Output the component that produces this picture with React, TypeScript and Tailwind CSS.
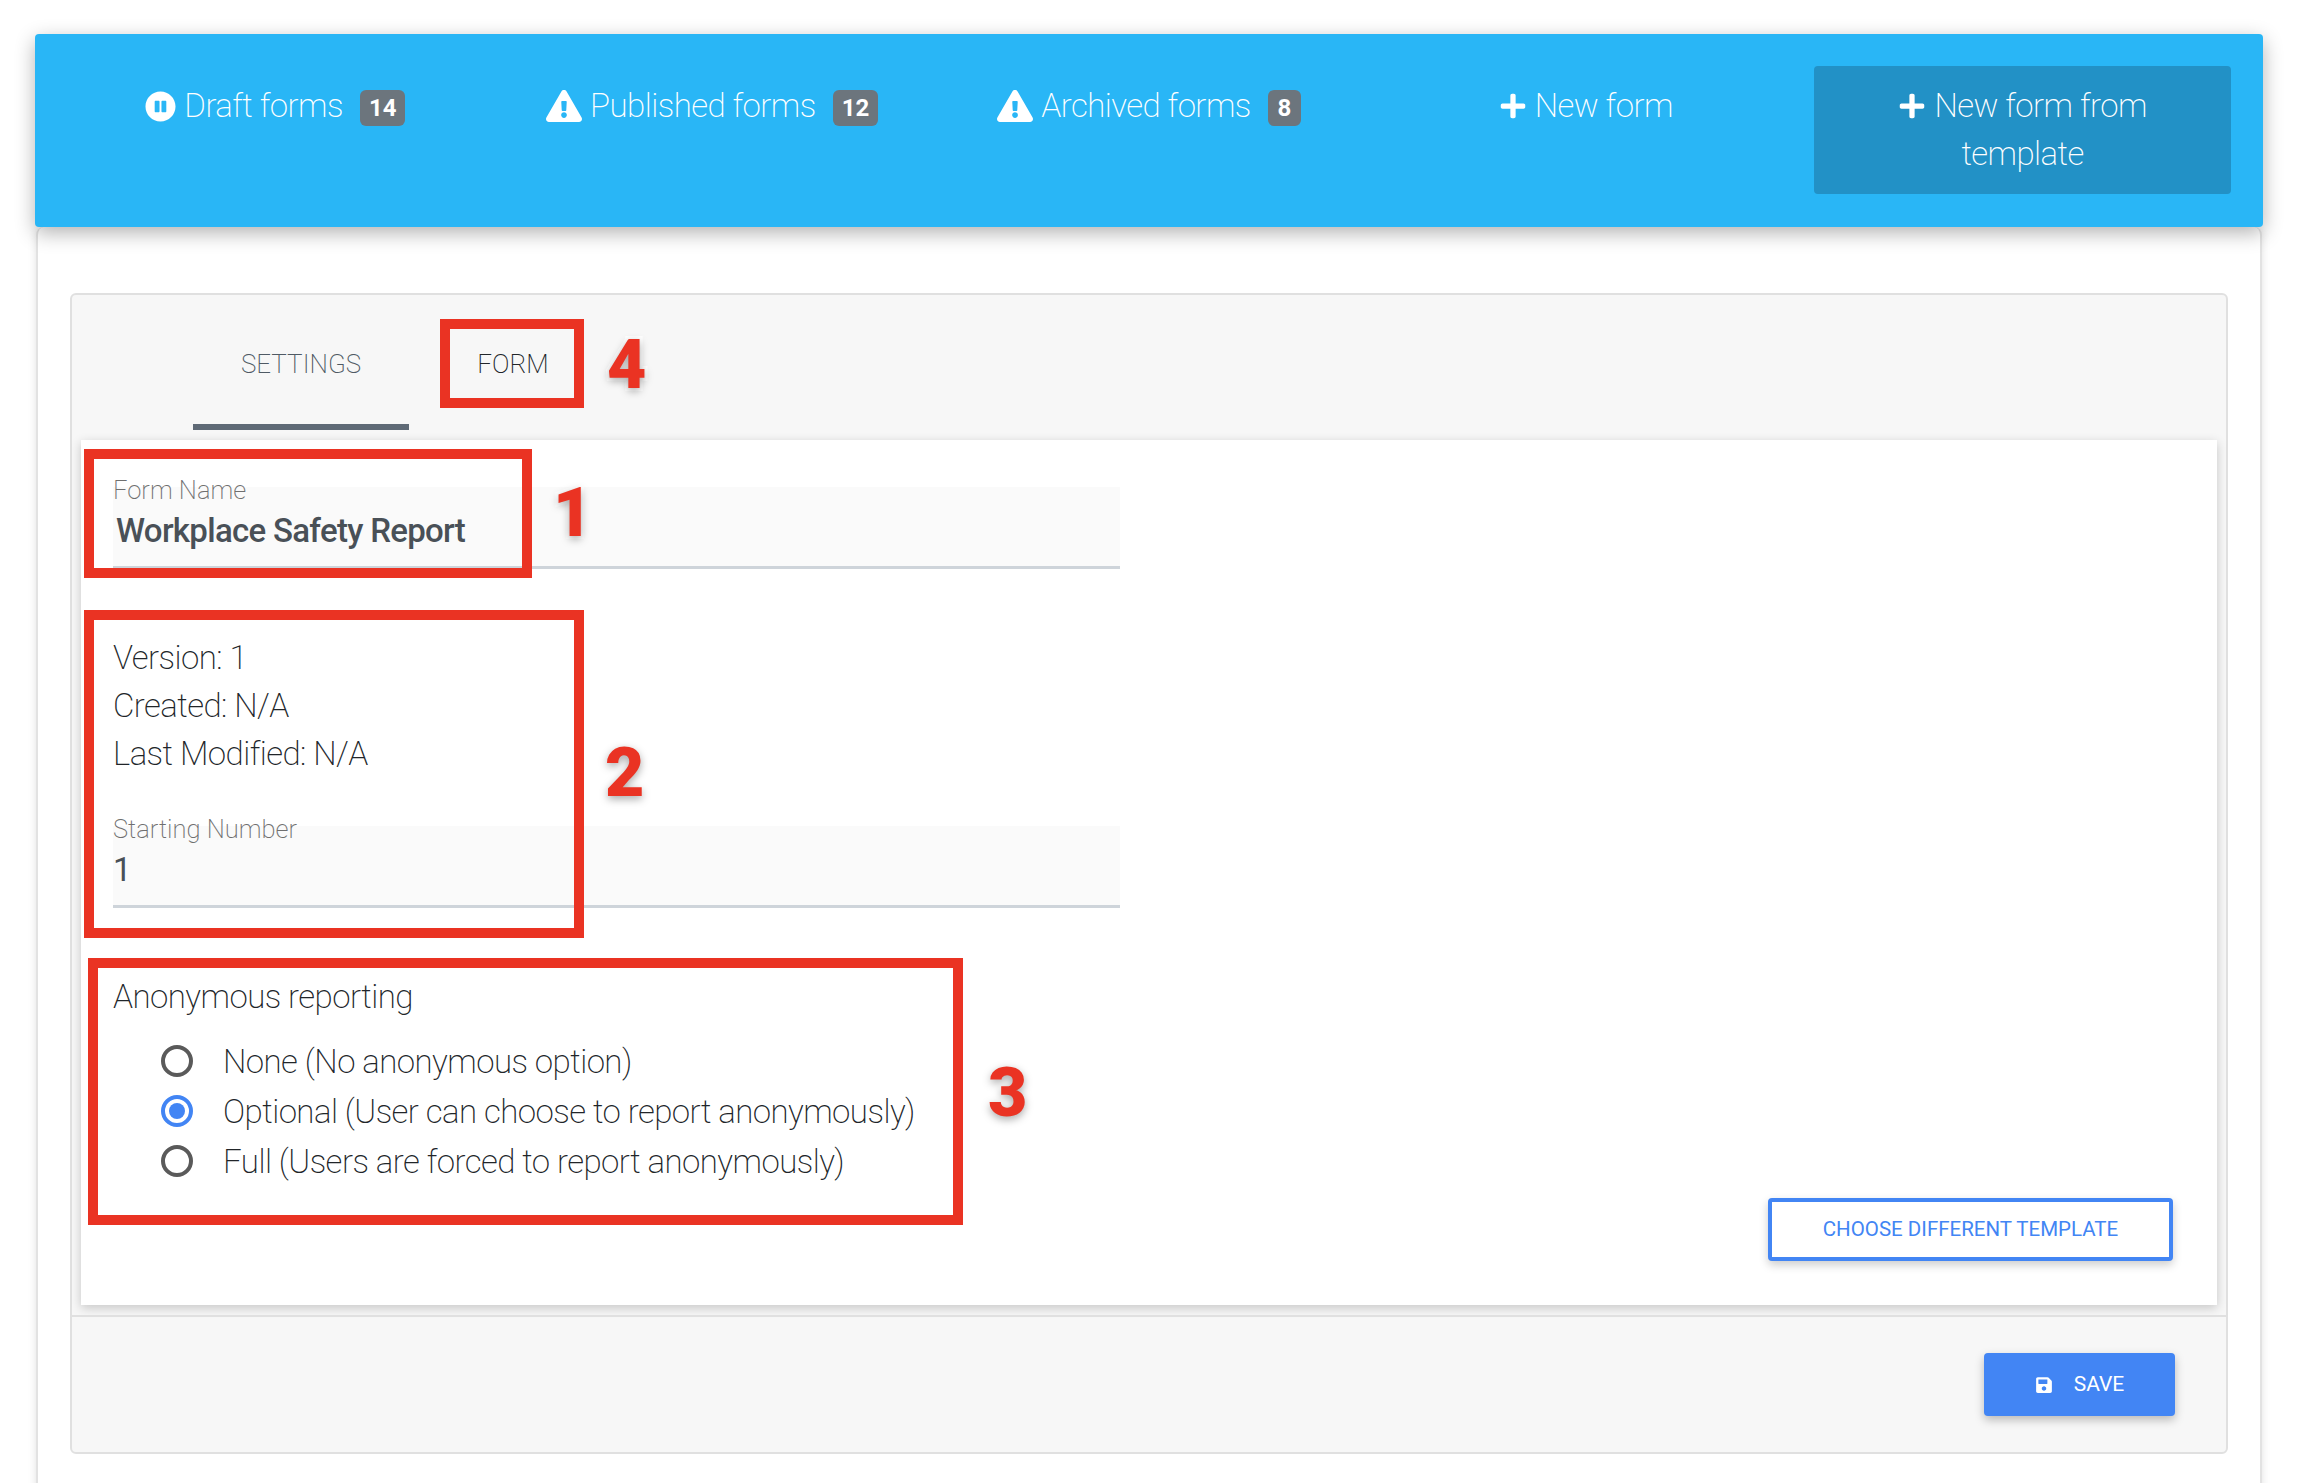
import React from 'react';
import { FaPauseCircle, FaExclamationTriangle, FaPlus, FaSave } from 'react-icons/fa';

const NavBadge: React.FC<{ value: number }> = ({ value }) => (
    <span className="ml-[17px] mt-[8px] inline-flex h-[36px] min-w-[33px] items-center justify-center rounded-[6px] bg-[#6c757d] px-[9px] text-[24px] font-bold leading-none text-white">
        {value}
    </span>
);

const NavItem: React.FC<{ icon: React.ReactNode; label: string; badge?: number }> = ({ icon, label, badge }) => (
    <div className="flex items-start justify-center pt-[16px]">
        <span className="flex h-[48px] items-center">{icon}</span>
        <span className="ml-[8px] text-[33px] font-[200] leading-[48px] tracking-[-0.55px] text-white">{label}</span>
        {badge !== undefined && <NavBadge value={badge} />}
    </div>
);

const Field: React.FC<{ label: string; value: string; bold?: boolean }> = ({ label, value, bold }) => (
    <div className="relative h-[82px] w-[1007px] border-b-[3px] border-[#ced4da] bg-[#fafafa]">
        <span className="absolute left-0 top-[-12px] text-[25.5px] font-[200] leading-[30px] text-[#6f6f6f]">{label}</span>
        <div className={bold ? 'pl-[3px] pt-[20px] text-[33px] font-medium leading-[48px] tracking-[-0.7px] text-[#495057]' : 'pt-[20px] text-[33px] font-normal leading-[48px] text-[#495057]'}>
            {value}
        </div>
    </div>
);

const Radio: React.FC<{ label: string; checked?: boolean }> = ({ label, checked }) => (
    <div className="flex h-[50px] items-center pl-[48px]">
        <span className={checked ? '-mt-[2px] flex h-[32px] w-[32px] items-center justify-center rounded-full border-[4px] border-[#4285f4]' : '-mt-[2px] h-[32px] w-[32px] rounded-full border-[4px] border-[#5a5a5a]'}>
            {checked && <span className="h-[16px] w-[16px] rounded-full bg-[#4285f4]" />}
        </span>
        <span className="ml-[30px] text-[33px] font-[200] leading-[48px] tracking-[-0.55px] text-[#212529]">{label}</span>
    </div>
);

const Callout: React.FC<{ className: string }> = ({ className }) => (
    <div className={`absolute border-[10px] border-[#ea3323] ${className}`} />
);

const CalloutNumber: React.FC<{ value: number; className: string }> = ({ value, className }) => (
    <span className={`absolute text-[68px] font-black leading-none text-[#ea3323] [-webkit-text-stroke:6px_#fff] [paint-order:stroke_fill] [text-shadow:0_3px_8px_rgba(0,0,0,0.35)] ${className}`}>
        {value}
    </span>
);

export default function App() {
    return (
        <div className="relative h-[1483px] overflow-hidden bg-white px-[35px] pt-[34px] [font-family:Roboto,'Liberation_Sans',sans-serif]">
            {/* Header */}
            <div className="relative z-10 grid h-[193px] grid-cols-5 gap-[20px] rounded-[4px] bg-[#29b6f6] px-[32px] pt-[32px] shadow-[0_6px_20px_rgba(0,0,0,0.3)]">
                <NavItem icon={<FaPauseCircle className="text-[31px] text-white" />} label="Draft forms" badge={14} />
                <NavItem icon={<FaExclamationTriangle className="text-[36px] text-white" />} label="Published forms" badge={12} />
                <NavItem icon={<FaExclamationTriangle className="text-[36px] text-white" />} label="Archived forms" badge={8} />
                <NavItem icon={<FaPlus className="text-[28px] text-white" />} label="New form" />
                <div className="h-[128px] rounded-[4px] bg-[#2291c6] pt-[16px] text-center text-[33px] font-[200] leading-[48px] tracking-[-0.55px] text-white">
                    <div className="flex items-center justify-center">
                        <FaPlus className="mr-[8px] text-[28px]" />
                        New form from
                    </div>
                    <div>template</div>
                </div>
            </div>

            {/* Page card */}
            <div className="mx-[1px] h-[1300px] rounded-[8px] border-x-2 border-[#e2e2e2] bg-white px-[32px] pt-[66px] shadow-[0_2px_8px_rgba(0,0,0,0.12)]">
                <div className="rounded-[6px] border-2 border-[#e0e0e0] bg-[#f7f7f7]">
                    {/* Tabs */}
                    <div className="flex h-[145px] pl-[121px]">
                        <div className="flex h-[135px] w-[216px] items-center justify-center border-b-[6px] border-[#5f6a76] pt-[9px] text-[26px] font-[200] text-[#4f5a64]">
                            SETTINGS
                        </div>
                        <div className="ml-[32px] flex h-[135px] w-[144px] items-center justify-center pt-[3px] text-[26px] font-[200] text-[#212529]">
                            FORM
                        </div>
                    </div>

                    {/* Form panel */}
                    <div className="mx-[9px] bg-white pl-[32px] pr-[45px] pt-[47px] pb-[44px] shadow-[0_3px_10px_rgba(0,0,0,0.2)]">
                        <Field label="Form Name" value="Workplace Safety Report" bold />
                        <div className="mt-[65px] text-[33px] font-[200] leading-[48px] tracking-[-0.55px] text-[#212529]">
                            <div>Version: 1</div>
                            <div>Created: N/A</div>
                            <div>Last Modified: N/A</div>
                        </div>
                        <div className="mt-[48px]">
                            <Field label="Starting Number" value="1" />
                        </div>
                        <div className="mt-[65px] text-[33px] font-[200] leading-[48px] tracking-[-0.55px] text-[#212529]">Anonymous reporting</div>
                        <div className="mt-[16px]">
                            <Radio label="None (No anonymous option)" />
                            <Radio label="Optional (User can choose to report anonymously)" checked />
                            <Radio label="Full (Users are forced to report anonymously)" />
                        </div>
                        <div className="mt-[11px] flex justify-end">
                            <button className="mr-[-1px] flex h-[63px] w-[405px] items-center justify-center rounded-[4px] border-[4px] border-[#4285f4] bg-white text-[20.5px] font-normal text-[#4285f4] shadow-[0_4px_10px_rgba(0,0,0,0.2)]">
                                CHOOSE DIFFERENT TEMPLATE
                            </button>
                        </div>
                    </div>

                    {/* Footer */}
                    <div className="mt-[10px] flex justify-end border-t-2 border-[#e0e0e0] pb-[36px] pr-[51px] pt-[36px]">
                        <button className="flex h-[63px] w-[191px] items-center justify-center rounded-[4px] bg-[#4285f4] text-[21px] font-normal text-white shadow-[0_4px_10px_rgba(0,0,0,0.25)]">
                            <FaSave className="mr-[21px] text-[18px]" />
                            SAVE
                        </button>
                    </div>
                </div>
            </div>

            {/* Annotations */}
            <Callout className="left-[84px] top-[449px] h-[129px] w-[448px]" />
            <Callout className="left-[84px] top-[610px] h-[328px] w-[500px]" />
            <Callout className="left-[88px] top-[958px] h-[267px] w-[875px]" />
            <Callout className="left-[440px] top-[319px] h-[89px] w-[144px]" />
            <CalloutNumber value={1} className="left-[553px] top-[479px]" />
            <CalloutNumber value={2} className="left-[605px] top-[739px]" />
            <CalloutNumber value={3} className="left-[988px] top-[1059px]" />
            <CalloutNumber value={4} className="left-[607px] top-[331px]" />
        </div>
    );
}
